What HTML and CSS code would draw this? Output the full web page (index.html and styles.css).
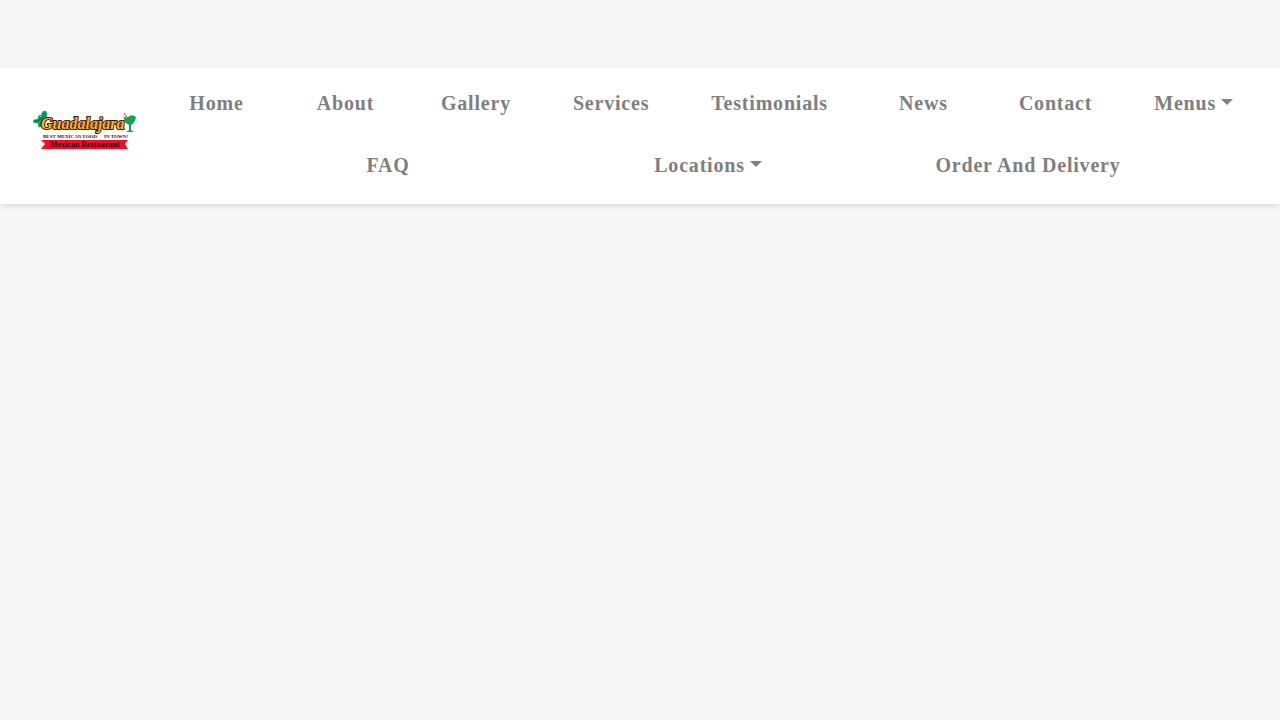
FILE: index.html
```
<!DOCTYPE html>
<html lang="en">
<head>
    <meta charset="UTF-8">
    <meta name="viewport" content="width=device-width, initial-scale=1.0">
    <title>Guadalajara Mexican Restaurant</title>
    <link rel="stylesheet" href="styles.css">
</head>
<body>
    <nav class="navbar">
        <a class="brand" href="#" aria-label="Guadalajara Mexican Restaurant">
            <svg class="logo" viewBox="0 0 110 54">
                <!-- sombrero -->
                <path d="M1 17 Q1 15 6 15 Q5 11 9 11 Q10 6 14 7 Q16 9 15 13 Q17 15 13 19 Q9 24 6 23 Q7 19 4 19 Q1 20 1 17Z" fill="#18a862"/>
                <path d="M3 17 Q8 18 13 9" fill="none" stroke="#0d6f7a" stroke-width="2"/>
                <path d="M7 21 Q12 19 15 13" fill="none" stroke="#0b6b5c"/>
                <path d="M8 13 L10 12" stroke="#7ad27a"/>
                <text class="logo-name" x="9" y="25">Guadalajara</text>
                <!-- margarita glass -->
                <path d="M91 12 L95 14 Q99 9 104 13 Q103 19 99 21 V26 L102 28 H94 L97 26 V21 Q92 19 92 14Z" fill="#14a550"/>
                <path d="M92 9 L97 16" stroke="#e03a22" stroke-width="1"/>
                <text class="logo-tag" x="11" y="34">BEST MEXICAN FOOD</text>
                <text class="logo-tag" x="72" y="34">IN TOWN!</text>
                <path d="M9 36 H96 L93 40 L96 45 H9 L13 40Z" fill="#e8112d"/>
                <path d="M9 38 L13 40 L9 43 M96 38 L93 40 L96 43" fill="none" stroke="#f3c98b"/>
                <text class="logo-sub" x="18" y="43">Mexican Restaurant</text>
            </svg>
        </a>
        <div class="menu">
            <ul class="nav-main">
                <li><a href="#">Home</a></li>
                <li><a href="#">About</a></li>
                <li><a href="#">Gallery</a></li>
                <li><a href="#">Services</a></li>
                <li><a href="#">Testimonials</a></li>
                <li><a href="#">News</a></li>
                <li><a href="#">Contact</a></li>
                <li><a class="dropdown" href="#">Menus</a></li>
            </ul>
            <ul class="nav-more">
                <li><a href="#">FAQ</a></li>
                <li><a class="dropdown" href="#">Locations</a></li>
                <li><a href="#">Order And Delivery</a></li>
            </ul>
        </div>
    </nav>
</body>
</html>
```
FILE: styles.css
```
body{
    margin: 0;
    padding-top: 68px;
    min-height: 100vh;
    box-sizing: border-box;
    background-color: #f7f7f7;
    font-family: "Liberation Serif", "Times New Roman", serif;
}
.navbar{
    display: flex;
    align-items: flex-start;
    gap: 10px;
    padding: 4px 16px 8px;
    background-color: white;
    box-shadow: 0 2px 4px rgba(0,0,0,.06), 0 3px 10px rgba(0,0,0,.06);
}
.brand{
    flex: none;
    padding: 32px 0 0 16px;
}
.logo{
    display: block;
    width: 110px;
    height: 54px;
}
.logo-name{
    font: italic bold 16px "Liberation Serif", serif;
    fill: #f9b233;
    stroke: #3a1508;
    stroke-width: 2px;
    stroke-linejoin: round;
    paint-order: stroke;
}
.logo-tag{
    font: bold 5px "Liberation Serif", serif;
    fill: #222;
}
.logo-sub{
    font: bold 8px "Liberation Serif", serif;
    fill: #3d0008;
}
.menu{
    flex: 1;
}
.menu ul{
    list-style: none;
    margin: 0;
    padding: 0;
}
.menu li{
    min-width: 67px;
    text-align: center;
}
.menu a{
    display: block;
    padding: 16px 0;
    font-size: 20px;
    line-height: 30px;
    font-weight: bold;
    letter-spacing: .04em;
    color: #7f7f7f;
    text-decoration: none;
    white-space: nowrap;
}
.nav-main{
    display: flex;
    flex-wrap: wrap;
    justify-content: space-around;
}
.nav-more{
    display: flex;
    flex-wrap: wrap;
    justify-content: center;
}
.nav-more li{
    width: 320px;
}
.menu .dropdown::after{
    content: "";
    display: inline-block;
    margin-left: 5px;
    vertical-align: 5px;
    border-top: 6px solid;
    border-left: 6px solid transparent;
    border-right: 6px solid transparent;
}
```
